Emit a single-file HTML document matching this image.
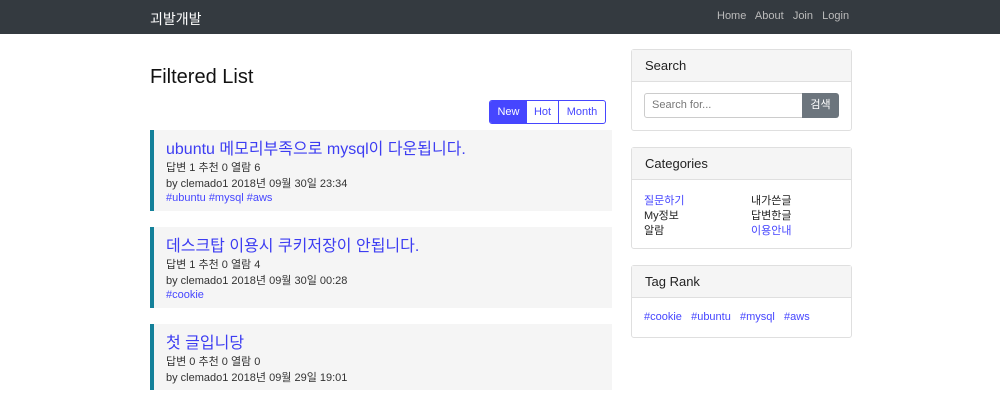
<!DOCTYPE html>
<html><head><meta charset="utf-8"><style>
*{box-sizing:border-box;margin:0;padding:0}
body{width:1000px;height:408px;overflow:hidden;background:#fff;font-family:"Liberation Sans","Noto Sans CJK KR",sans-serif;color:#222;position:relative}
.a{position:absolute;white-space:nowrap}
.nav{position:absolute;left:0;top:0;width:1000px;height:34px;background:#343a40}
.blue{color:#4646ff !important}
.card{position:absolute;left:150px;width:462px;background:#f5f5f5;border-left:4px solid #14819a}
.card .t{position:absolute;left:12px;font-size:16px;color:#3d3df2}
.card .l{position:absolute;left:12px;font-size:11px;color:#333}
.box{position:absolute;left:631px;width:221px;border:1px solid #dfdfdf;border-radius:3px}
.box .h{height:32px;background:#f5f5f5;border-bottom:1px solid #dfdfdf;font-size:13px;padding:8px 13px;color:#222}
.s{font-size:11px}
</style></head><body>
<div class="nav"></div>
<div class="a" style="left:150px;top:9px;font-size:14px;color:#fff">괴발개발</div>
<div class="a" style="left:717px;top:10px;font-size:11px;color:#bbb">Home&nbsp;&nbsp; About&nbsp;&nbsp; Join&nbsp;&nbsp; Login</div>
<div class="a" style="left:150px;top:66px;font-size:20px;color:#111">Filtered List</div>
<div class="a" style="left:489px;top:100px;width:117px;height:24px;border:1px solid #4646ff;border-radius:3px;display:flex;font-size:11px;overflow:hidden">
<div style="width:37px;background:#4646ff;color:#fff;text-align:center;line-height:22px">New</div>
<div style="width:32px;color:#4646ff;text-align:center;line-height:22px;border-right:1px solid #4646ff">Hot</div>
<div style="flex:1;color:#4646ff;text-align:center;line-height:22px">Month</div></div>

<div class="card" style="top:130px;height:81px">
<div class="t" style="top:5px">ubuntu 메모리부족으로 mysql이 다운됩니다.</div>
<div class="l" style="top:29px">답변 1 추천 0 열람 6</div>
<div class="l" style="top:45px">by clemado1 2018년 09월 30일 23:34</div>
<div class="l blue" style="top:62px">#ubuntu #mysql #aws</div></div>
<div class="card" style="top:227px;height:81px">
<div class="t" style="top:5px">데스크탑 이용시 쿠키저장이 안됩니다.</div>
<div class="l" style="top:29px">답변 1 추천 0 열람 4</div>
<div class="l" style="top:45px">by clemado1 2018년 09월 30일 00:28</div>
<div class="l blue" style="top:62px">#cookie</div></div>
<div class="card" style="top:324px;height:66px">
<div class="t" style="top:5px">첫 글입니당</div>
<div class="l" style="top:29px">답변 0 추천 0 열람 0</div>
<div class="l" style="top:45px">by clemado1 2018년 09월 29일 19:01</div></div>

<div class="box" style="top:49px;height:82px"><div class="h">Search</div></div>
<div class="a" style="left:644px;top:93px;width:159px;height:25px;border:1px solid #ccc;border-radius:3px 0 0 3px;font-size:11px;color:#777;padding:5px 7px">Search for...</div>
<div class="a" style="left:802px;top:93px;width:37px;height:25px;background:#6c757d;border-radius:0 3px 3px 0;color:#fff;font-size:11px;text-align:center;line-height:25px">검색</div>

<div class="box" style="top:147px;height:102px"><div class="h">Categories</div></div>
<div class="a s blue" style="left:644px;top:192px">질문하기</div>
<div class="a s" style="left:644px;top:207px">My정보</div>
<div class="a s" style="left:644px;top:222px">알람</div>
<div class="a s" style="left:751px;top:192px">내가쓴글</div>
<div class="a s" style="left:751px;top:207px">답변한글</div>
<div class="a s blue" style="left:751px;top:222px">이용안내</div>

<div class="box" style="top:265px;height:73px"><div class="h">Tag Rank</div></div>
<div class="a s blue" style="left:644px;top:311px">#cookie &nbsp;&nbsp;#ubuntu &nbsp;&nbsp;#mysql &nbsp;&nbsp;#aws</div>
</body></html>
